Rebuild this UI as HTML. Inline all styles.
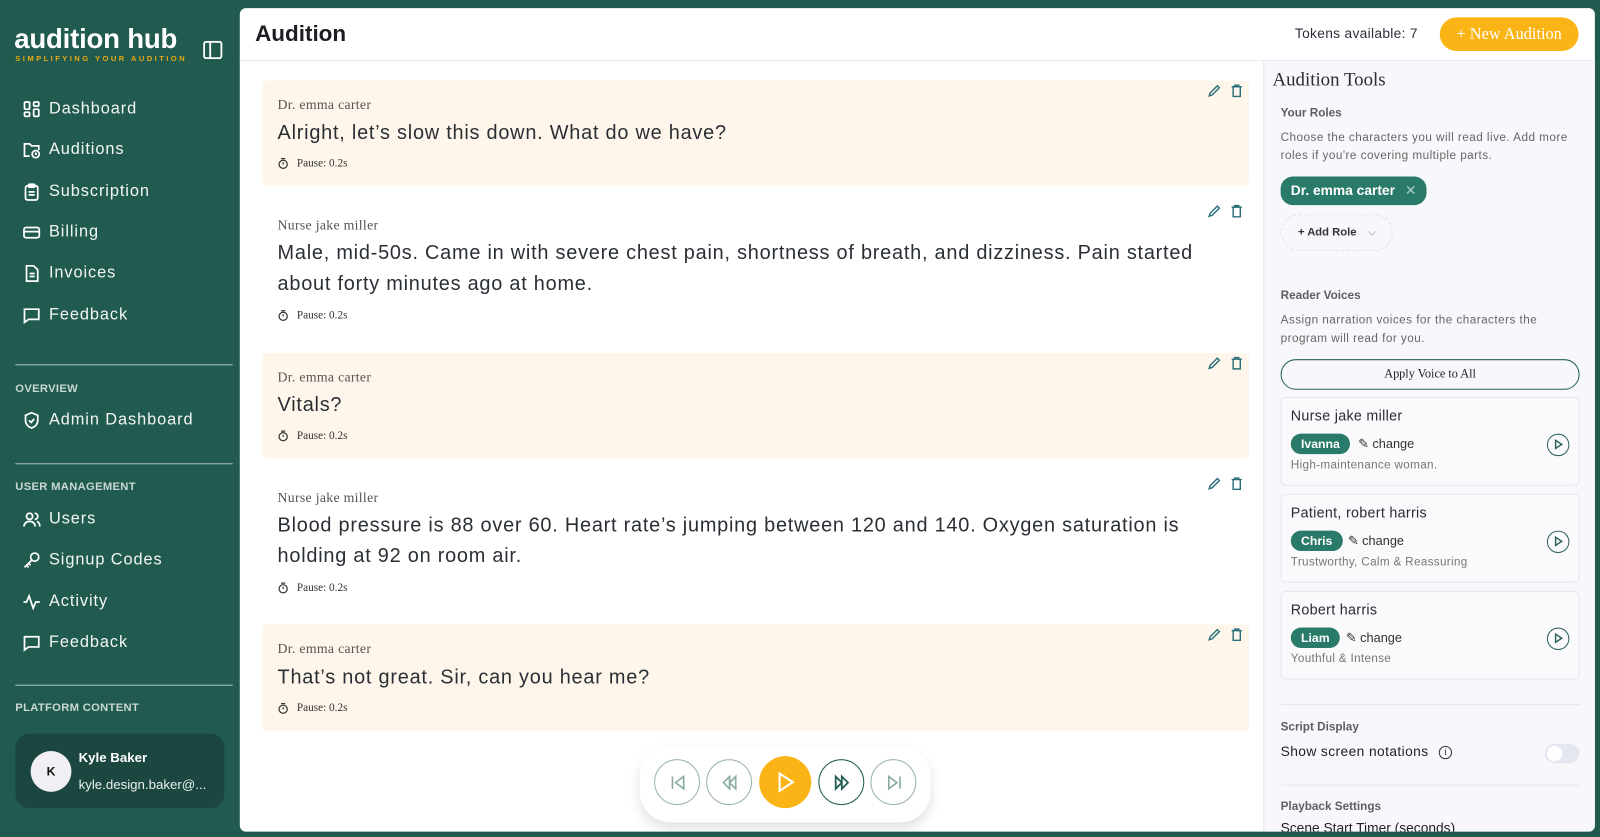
<!DOCTYPE html>
<html><head><meta charset="utf-8"><style>
*{box-sizing:border-box;margin:0;padding:0}
html,body{width:1600px;height:836px;overflow:hidden;background:#215b50}
#w{position:absolute;left:0;top:0;width:1568px;height:820px;transform:scale(1.0204);transform-origin:0 0;font-family:"Liberation Sans",sans-serif;color:#2a2e3a}
.sb{position:absolute;left:0;top:0;width:235px;height:820px;color:#fff}
.logo{position:absolute;left:14px;top:23px;font-size:27px;font-weight:bold;letter-spacing:-0.2px;color:#fff}
.tag{position:absolute;left:15px;top:53px;font-size:7.5px;letter-spacing:2.35px;color:#e7a716;font-weight:bold}
.nav{position:absolute;left:22px;font-size:16px;letter-spacing:0.9px;display:flex;align-items:center;gap:8px;color:#f2f5f4}
.nav svg{width:18px;height:18px;stroke:#fff;fill:none;stroke-width:1.7}
.hr{position:absolute;left:15px;width:213px;height:1px;background:#a8c4be}
.sec{position:absolute;left:15px;font-size:11px;font-weight:bold;color:#c9d8d4;letter-spacing:0.3px}
.user{position:absolute;left:15px;top:719px;width:205px;height:73px;border-radius:14px;background:#1b4740}
.av{position:absolute;left:15px;top:17px;width:40px;height:40px;border-radius:50%;background:#f1eff3;color:#111;font-size:12px;font-weight:bold;text-align:center;line-height:40px}
.main{position:absolute;left:235px;top:8px;width:1328px;height:807px;background:#fff;border-radius:6px;overflow:hidden}
.hdr{position:absolute;left:0;top:0;width:100%;height:52px;border-bottom:1px solid #e6e6f0}
.title{position:absolute;left:15px;top:12px;font-size:22px;font-weight:bold;color:#1d1d24}
.tok{position:absolute;left:1034px;top:17px;font-size:13.5px;color:#2b2f3d;letter-spacing:0.3px}
.newb{position:absolute;left:1176px;top:9px;width:136px;height:33px;border-radius:17px;background:#fbb415;color:#fff;font-family:"Liberation Serif",serif;font-size:16px;text-align:center;line-height:33px}
.card{position:absolute;left:22px;width:967px;border-radius:4px}
.cream{background:#fef6ea}
.sp{position:absolute;left:15px;font-family:"Liberation Serif",serif;font-size:13.5px;color:#555;letter-spacing:0.3px}
.ln{position:absolute;left:15px;font-size:19.5px;color:#2a2f36;line-height:30px;width:920px;letter-spacing:0.75px}
.pz{position:absolute;left:15px;font-family:"Liberation Serif",serif;font-size:11px;color:#333;display:flex;gap:8px;align-items:center}
.ic{position:absolute;right:6px;display:flex;gap:9px}
.rp{position:absolute;left:1003px;top:52px;width:325px;height:755px;background:#f8f7fb;border-left:1px solid #e4e4ef}
.rp .t{position:absolute;left:8px;top:9px;font-family:"Liberation Serif",serif;font-size:18.5px;color:#2a2a33}
.lbl{position:absolute;left:16px;font-size:11.5px;color:#444;font-weight:bold;opacity:.85}
.desc{position:absolute;left:16px;font-size:11.5px;color:#666;line-height:18px;width:300px;letter-spacing:0.45px}
.chip{position:absolute;background:#297a68;color:#fff;border-radius:12px;font-size:12px;font-weight:bold}
.vc{position:absolute;left:16px;width:293px;height:87px;border:1px solid #e5e5f0;border-radius:5px;background:#faf9fc}
.vc .n{position:absolute;left:9px;top:9px;font-size:14px;color:#2b2b33;letter-spacing:0.3px}
.vc .c{position:absolute;left:9px;top:35px;height:20px;line-height:20px;padding:0 10px}
.vc .ch{position:absolute;top:37px;font-size:12.5px;color:#333}
.vc .d{position:absolute;left:9px;top:60px;font-size:11.5px;color:#777;letter-spacing:0.3px}
.vc .p{position:absolute;right:9px;top:35px;width:22px;height:22px;border:1.5px solid #2a5f54;border-radius:50%}
.sep{position:absolute;left:16px;width:293px;height:1px;background:#e6e6ee}
.pl{position:absolute;left:392px;top:723px;width:285px;height:75px;border-radius:30px;background:#fff;box-shadow:0 6px 12px rgba(0,0,0,.12)}
.cb{position:absolute;top:13px;width:45px;height:45px;border-radius:50%;border:1.5px solid #9cb5b0}
</style></head><body><div id="w">
<div class="sb">
<div class="logo">audition hub</div>
<div class="tag">SIMPLIFYING YOUR AUDITION</div>
<svg style="position:absolute;left:199px;top:40px" width="19" height="18" viewBox="0 0 19 18" fill="none" stroke="#fff" stroke-width="1.8"><rect x="1" y="1" width="17" height="16" rx="2"/><line x1="7" y1="1" x2="7" y2="17"/></svg>
<div class="nav" style="top:98px"><svg viewBox="0 0 18 18"><rect x="2" y="2" width="5" height="7" rx="1"/><rect x="11" y="2" width="5" height="4" rx="1"/><rect x="2" y="12" width="5" height="4" rx="1"/><rect x="11" y="9" width="5" height="7" rx="1"/></svg>Dashboard</div>
<div class="nav" style="top:138px"><svg viewBox="0 0 18 18"><path d="M7 15H2V3h5l2 2h7v4"/><circle cx="13" cy="13" r="3.5"/><path d="M13 11.5V13h1.2"/></svg>Auditions</div>
<div class="nav" style="top:179px"><svg viewBox="0 0 18 18"><rect x="3" y="3" width="12" height="14" rx="2"/><rect x="6" y="1.5" width="6" height="3" rx="1"/><path d="M6 9h6M6 12h6"/></svg>Subscription</div>
<div class="nav" style="top:219px"><svg viewBox="0 0 18 18"><rect x="1.5" y="4" width="15" height="10" rx="2"/><path d="M1.5 8h15"/></svg>Billing</div>
<div class="nav" style="top:259px"><svg viewBox="0 0 18 18"><path d="M4 1.5h7l4 4V16.5H4z"/><path d="M7 9h5M7 12h5"/></svg>Invoices</div>
<div class="nav" style="top:300px"><svg viewBox="0 0 18 18"><path d="M2 3h14v10H6l-4 3z"/></svg>Feedback</div>
<div class="hr" style="top:357px"></div>
<div class="sec" style="top:375px">OVERVIEW</div>
<div class="nav" style="top:403px"><svg viewBox="0 0 18 18"><path d="M9 1.5l6 2.5v5c0 4-3 6.5-6 7.5-3-1-6-3.5-6-7.5V4z"/><path d="M6.5 9l2 2 3-3.5"/></svg>Admin Dashboard</div>
<div class="hr" style="top:454px"></div>
<div class="sec" style="top:471px">USER MANAGEMENT</div>
<div class="nav" style="top:500px"><svg viewBox="0 0 18 18"><circle cx="7" cy="6" r="3"/><path d="M1.5 16c0-3 2.5-5 5.5-5s5.5 2 5.5 5M12 3a3 3 0 010 6M14 11c2 .5 3 2.5 3 5"/></svg>Users</div>
<div class="nav" style="top:540px"><svg viewBox="0 0 18 18"><circle cx="12" cy="6" r="4"/><path d="M9 9l-7 7M4 14l2 2M6 12l2 2"/></svg>Signup Codes</div>
<div class="nav" style="top:581px"><svg viewBox="0 0 18 18"><path d="M1 9h3l2.5-6 4 12 2.5-6h4"/></svg>Activity</div>
<div class="nav" style="top:621px"><svg viewBox="0 0 18 18"><path d="M2 3h14v10H6l-4 3z"/></svg>Feedback</div>
<div class="hr" style="top:671px"></div>
<div class="sec" style="top:688px">PLATFORM CONTENT</div>
<div class="user"><div class="av">K</div><div style="position:absolute;left:62px;top:16px;font-size:13px;font-weight:bold">Kyle Baker</div><div style="position:absolute;left:62px;top:42px;font-size:13px;color:#e8efed">kyle.design.baker@...</div></div>
</div>

<div class="main">
<div class="hdr"><div class="title">Audition</div><div class="tok">Tokens available: 7</div><div class="newb">+ New Audition</div></div>

<div class="card cream" style="top:71px;height:103px"><div class="sp" style="top:16px">Dr. emma carter</div><div class="ln" style="top:36px">Alright, let’s slow this down. What do we have?</div><div class="pz" style="top:75px"><svg width="11" height="12" viewBox="0 0 11 12" fill="none" stroke="#333" stroke-width="1.2"><circle cx="5.5" cy="7" r="4"/><path d="M3.5 1.5h4M5.5 5v2.2"/></svg><span>Pause: 0.2s</span></div>
<div class="ic" style="top:3px"><svg width="14" height="14" viewBox="0 0 14 14" fill="none" stroke="#2a6e7a" stroke-width="1.4"><path d="M2 12l1-3 7-7 2 2-7 7z"/></svg><svg width="12" height="14" viewBox="0 0 12 14" fill="none" stroke="#2a6e7a" stroke-width="1.4"><path d="M1 3h10M4 3V1.5h4V3M2.5 3v9.5h7V3"/></svg></div></div>

<div class="card" style="top:189px;height:130px"><div class="sp" style="top:16px">Nurse jake miller</div><div class="ln" style="top:36px">Male, mid-50s. Came in with severe chest pain, shortness of breath, and dizziness. Pain started about forty minutes ago at home.</div><div class="pz" style="top:106px"><svg width="11" height="12" viewBox="0 0 11 12" fill="none" stroke="#333" stroke-width="1.2"><circle cx="5.5" cy="7" r="4"/><path d="M3.5 1.5h4M5.5 5v2.2"/></svg><span>Pause: 0.2s</span></div>
<div class="ic" style="top:3px"><svg width="14" height="14" viewBox="0 0 14 14" fill="none" stroke="#2a6e7a" stroke-width="1.4"><path d="M2 12l1-3 7-7 2 2-7 7z"/></svg><svg width="12" height="14" viewBox="0 0 12 14" fill="none" stroke="#2a6e7a" stroke-width="1.4"><path d="M1 3h10M4 3V1.5h4V3M2.5 3v9.5h7V3"/></svg></div></div>

<div class="card cream" style="top:338px;height:103px"><div class="sp" style="top:16px">Dr. emma carter</div><div class="ln" style="top:36px">Vitals?</div><div class="pz" style="top:75px"><svg width="11" height="12" viewBox="0 0 11 12" fill="none" stroke="#333" stroke-width="1.2"><circle cx="5.5" cy="7" r="4"/><path d="M3.5 1.5h4M5.5 5v2.2"/></svg><span>Pause: 0.2s</span></div>
<div class="ic" style="top:3px"><svg width="14" height="14" viewBox="0 0 14 14" fill="none" stroke="#2a6e7a" stroke-width="1.4"><path d="M2 12l1-3 7-7 2 2-7 7z"/></svg><svg width="12" height="14" viewBox="0 0 12 14" fill="none" stroke="#2a6e7a" stroke-width="1.4"><path d="M1 3h10M4 3V1.5h4V3M2.5 3v9.5h7V3"/></svg></div></div>

<div class="card" style="top:456px;height:130px"><div class="sp" style="top:16px">Nurse jake miller</div><div class="ln" style="top:36px">Blood pressure is 88 over 60. Heart rate’s jumping between 120 and 140. Oxygen saturation is holding at 92 on room air.</div><div class="pz" style="top:106px"><svg width="11" height="12" viewBox="0 0 11 12" fill="none" stroke="#333" stroke-width="1.2"><circle cx="5.5" cy="7" r="4"/><path d="M3.5 1.5h4M5.5 5v2.2"/></svg><span>Pause: 0.2s</span></div>
<div class="ic" style="top:3px"><svg width="14" height="14" viewBox="0 0 14 14" fill="none" stroke="#2a6e7a" stroke-width="1.4"><path d="M2 12l1-3 7-7 2 2-7 7z"/></svg><svg width="12" height="14" viewBox="0 0 12 14" fill="none" stroke="#2a6e7a" stroke-width="1.4"><path d="M1 3h10M4 3V1.5h4V3M2.5 3v9.5h7V3"/></svg></div></div>

<div class="card cream" style="top:604px;height:104px"><div class="sp" style="top:16px">Dr. emma carter</div><div class="ln" style="top:37px">That’s not great. Sir, can you hear me?</div><div class="pz" style="top:76px"><svg width="11" height="12" viewBox="0 0 11 12" fill="none" stroke="#333" stroke-width="1.2"><circle cx="5.5" cy="7" r="4"/><path d="M3.5 1.5h4M5.5 5v2.2"/></svg><span>Pause: 0.2s</span></div>
<div class="ic" style="top:3px"><svg width="14" height="14" viewBox="0 0 14 14" fill="none" stroke="#2a6e7a" stroke-width="1.4"><path d="M2 12l1-3 7-7 2 2-7 7z"/></svg><svg width="12" height="14" viewBox="0 0 12 14" fill="none" stroke="#2a6e7a" stroke-width="1.4"><path d="M1 3h10M4 3V1.5h4V3M2.5 3v9.5h7V3"/></svg></div></div>

<div class="pl">
<div class="cb" style="left:14px"><svg width="45" height="45" viewBox="0 0 45 45" fill="none" stroke="#8aa9a3" stroke-width="1.6"><path d="M17 16v12M28 16l-8 6 8 6z"/></svg></div>
<div class="cb" style="left:65px"><svg width="45" height="45" viewBox="0 0 45 45" fill="none" stroke="#8aa9a3" stroke-width="1.6"><path d="M22 16l-6 6 6 6zM28 16l-6 6 6 6z"/></svg></div>
<div class="cb" style="left:117px;top:10px;width:51px;height:51px;border:none;background:#fbb415"><svg width="51" height="51" viewBox="0 0 51 51" fill="none" stroke="#fff" stroke-width="2"><path d="M20 17v17l13-8.5z"/></svg></div>
<div class="cb" style="left:175px;border-color:#255f53"><svg width="45" height="45" viewBox="0 0 45 45" fill="none" stroke="#255f53" stroke-width="1.8"><path d="M16 16l6 6-6 6zM22 16l6 6-6 6z"/></svg></div>
<div class="cb" style="left:226px"><svg width="45" height="45" viewBox="0 0 45 45" fill="none" stroke="#8aa9a3" stroke-width="1.6"><path d="M28 16v12M17 16l8 6-8 6z"/></svg></div>
</div>

<div class="rp">
<div class="t">Audition Tools</div>
<div class="lbl" style="top:45px">Your Roles</div>
<div class="desc" style="top:66px">Choose the characters you will read live. Add more roles if you're covering multiple parts.</div>
<div class="chip" style="left:16px;top:113px;height:28px;line-height:28px;padding:0 10px;font-size:13.5px">Dr. emma carter <span style="font-weight:normal;opacity:.6;margin-left:6px">✕</span></div>
<div style="position:absolute;left:16px;top:150px;width:110px;height:36px;border:1px dashed #e1e1ea;border-radius:18px;font-size:11px;font-weight:bold;color:#333;line-height:34px;padding-left:16px">+ Add Role <span style="font-weight:normal;color:#888;margin-left:8px">⌵</span></div>
<div class="lbl" style="top:224px">Reader Voices</div>
<div class="desc" style="top:245px">Assign narration voices for the characters the program will read for you.</div>
<div style="position:absolute;left:16px;top:292px;width:293px;height:30px;border:1.5px solid #255f53;border-radius:15px;text-align:center;line-height:27px;font-family:'Liberation Serif',serif;font-size:12px;color:#222">Apply Voice to All</div>
<div class="vc" style="top:329px"><div class="n">Nurse jake miller</div><div class="chip c">Ivanna</div><div class="ch" style="left:75px">✎ change</div><div class="d">High-maintenance woman.</div><div class="p"><svg width="19" height="19" viewBox="0 0 19 19" fill="none" stroke="#2a5f54" stroke-width="1.4"><path d="M7.5 5.5v8l6-4z"/></svg></div></div>
<div class="vc" style="top:424px"><div class="n">Patient, robert harris</div><div class="chip c">Chris</div><div class="ch" style="left:65px">✎ change</div><div class="d">Trustworthy, Calm &amp; Reassuring</div><div class="p"><svg width="19" height="19" viewBox="0 0 19 19" fill="none" stroke="#2a5f54" stroke-width="1.4"><path d="M7.5 5.5v8l6-4z"/></svg></div></div>
<div class="vc" style="top:519px"><div class="n">Robert harris</div><div class="chip c">Liam</div><div class="ch" style="left:63px">✎ change</div><div class="d">Youthful &amp; Intense</div><div class="p"><svg width="19" height="19" viewBox="0 0 19 19" fill="none" stroke="#2a5f54" stroke-width="1.4"><path d="M7.5 5.5v8l6-4z"/></svg></div></div>
<div class="sep" style="top:630px"></div>
<div class="lbl" style="top:647px">Script Display</div>
<div style="position:absolute;left:16px;top:669px;font-size:13.5px;color:#222;letter-spacing:0.4px">Show screen notations <span style="display:inline-block;width:13px;height:13px;border:1.3px solid #333;border-radius:50%;font-size:9px;text-align:center;line-height:11px;margin-left:6px;vertical-align:middle;letter-spacing:0">i</span></div>
<div style="position:absolute;left:275px;top:669px;width:34px;height:19px;border-radius:10px;background:#e4e6f0"><div style="position:absolute;left:2px;top:2px;width:15px;height:15px;border-radius:50%;background:#fff"></div></div>
<div class="sep" style="top:709px"></div>
<div class="lbl" style="top:725px">Playback Settings</div>
<div style="position:absolute;left:16px;top:744px;font-size:13.5px;color:#222">Scene Start Timer (seconds)</div>
</div>
</div>
</div></body></html>
